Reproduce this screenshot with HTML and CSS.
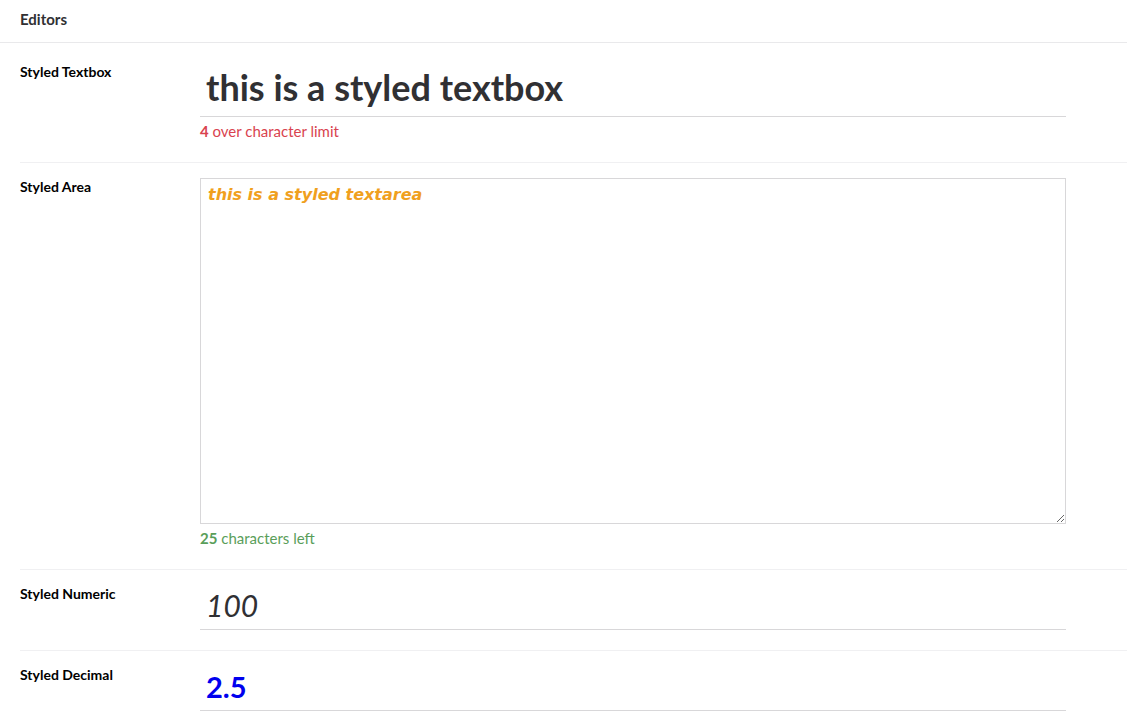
FILE: index.html
```html
<!DOCTYPE html>
<html>
<head>
<meta charset="utf-8">
<link rel="stylesheet" href="styles.css">
</head>
<body>
<div class="header">Editors</div>
<div class="props">
  <div class="prop">
    <div class="label">Styled Textbox</div>
    <div class="editor">
      <input class="textbox" type="text" value="this is a styled textbox">
      <div class="msg msg-danger"><b>4</b> over character limit</div>
    </div>
  </div>
  <div class="prop">
    <div class="label">Styled Area</div>
    <div class="editor">
      <textarea class="area">this is a styled textarea</textarea>
      <div class="msg msg-ok"><b>25</b> characters left</div>
    </div>
  </div>
  <div class="prop">
    <div class="label">Styled Numeric</div>
    <div class="editor">
      <input class="numeric" type="text" value="100">
    </div>
  </div>
  <div class="prop">
    <div class="label">Styled Decimal</div>
    <div class="editor">
      <input class="decimal" type="text" value="2.5">
    </div>
  </div>
</div>
</body>
</html>
```
FILE: styles.css
```css
html, body {
  margin: 0;
  padding: 0;
  background: #fff;
  font-family: Lato, "Open Sans", sans-serif;
  color: #303033;
}
.header {
  height: 42px;
  line-height: 38px;
  padding: 0 20px;
  font-size: 15px;
  font-weight: bold;
  color: #303033;
  border-bottom: 1px solid #e9e9eb;
}
.props {
  padding: 5px 0 0 20px;
}
.prop {
  display: grid;
  grid-template-columns: 180px 866px;
  padding: 15px 0 20px;
  border-bottom: 1px solid #f0f0f2;
}
.label {
  font-size: 14px;
  font-weight: bold;
  line-height: 18px;
  color: #000;
}
.editor {
  display: flex;
  flex-direction: column;
}
input, textarea {
  box-sizing: border-box;
  width: 866px;
  margin: 0;
  outline: none;
}
.textbox, .numeric, .decimal {
  border: 0;
  border-bottom: 1px solid #d8d7d9;
  padding: 0 6px;
  background: transparent;
}
.textbox {
  height: 54px;
  padding-bottom: 6px;
  font-family: Lato, sans-serif;
  font-weight: bold;
  font-size: 36px;
  color: #303033;
}
.numeric {
  height: 45px;
  padding-bottom: 4px;
  font-family: Lato, sans-serif;
  font-style: italic;
  font-size: 30px;
  color: #303033;
}
.decimal {
  height: 45px;
  padding-bottom: 4px;
  font-family: Lato, sans-serif;
  font-weight: bold;
  font-size: 29px;
  color: #0000ee;
}
.area {
  height: 346px;
  border: 1px solid #d8d7d9;
  padding: 5px 7px;
  font-family: "Comic Sans MS", "DejaVu Sans", sans-serif;
  font-weight: bold;
  font-style: italic;
  font-size: 16px;
  line-height: 22px;
  color: #f0a01e;
  resize: vertical;
}
.msg {
  margin-top: 4px;
  padding-bottom: 1px;
  font-size: 15px;
  line-height: 20px;
}
.msg-danger { color: #d9434f; }
.msg-ok { color: #5a9e5a; }
```
